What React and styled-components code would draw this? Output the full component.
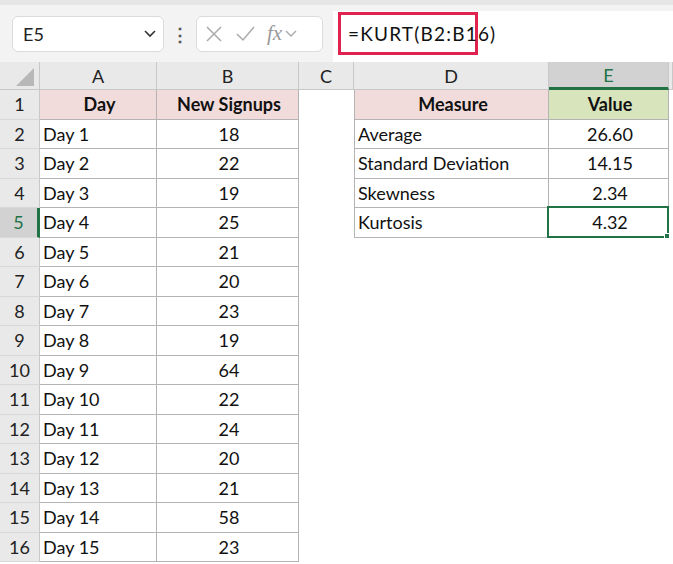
import React from "react";
import styled, { createGlobalStyle } from "styled-components";

const G = createGlobalStyle`
  body{margin:0;background:#fff;font-family:Lato,"Open Sans",sans-serif;}
`;
const Bar = styled.div`height:62px;background:#f3f3f3;border-top:5px solid #e6e6e6;box-sizing:border-box;display:flex;align-items:center;position:relative;`;
const NameBox = styled.div`margin-left:12px;width:152px;height:36px;box-sizing:border-box;background:#fff;border:1px solid #dcdcdc;border-radius:6px;display:flex;align-items:center;justify-content:space-between;padding:0 6px 0 10px;font-size:18px;color:#222;`;
const Dots = styled.div`width:32px;text-align:center;color:#555;font-size:18px;font-weight:bold;`;
const FxBox = styled.div`width:127px;height:36px;box-sizing:border-box;background:#fff;border:1px solid #dcdcdc;border-radius:6px;display:flex;align-items:center;gap:12px;padding:0 6px 0 8px;color:#aaa;`;
const Formula = styled.div`flex:1;align-self:stretch;margin:6px 0 0 10px;background:#fff;display:flex;align-items:center;`;
const Red = styled.div`margin-left:5px;margin-bottom:6px;height:43px;width:140px;box-sizing:border-box;border:3px solid #e0234e;display:flex;align-items:center;padding-left:7px;font-size:19px;font-family:Lato,sans-serif;letter-spacing:1.2px;color:#111;white-space:nowrap;`;
const Grid = styled.div`display:grid;grid-template-columns:40px 117px 142px 55px 195px 120px 4px;grid-template-rows:28px repeat(16,29.5px);font-size:18px;`;
const Hdr = styled.div`background:${p=>p.sel?"#d2d2d2":"#e9e9e9"};color:${p=>p.sel?"#217346":"#222"};border-right:1px solid #c8c8c8;border-bottom:${p=>p.sel?"3px solid #217346":"1px solid #c8c8c8"};display:flex;align-items:center;justify-content:center;box-sizing:border-box;`;
const RowH = styled(Hdr)`border-bottom:1px solid #d8d8d8;border-right:${p=>p.sel?"3px solid #217346":"1px solid #c8c8c8"};`;
const Cell = styled.div`box-sizing:border-box;display:flex;align-items:center;justify-content:${p=>p.c?"center":"flex-start"};padding-left:3px;background:${p=>p.bg||"#fff"};font-weight:${p=>p.b?700:400};color:#111;
  border-right:${p=>p.t?"1px solid #b4b4b4":"none"};border-bottom:${p=>p.t?"1px solid #b4b4b4":"none"};border-left:${p=>p.l?"1px solid #b4b4b4":"none"};position:relative;`;
const Sel = styled.div`position:absolute;inset:-2px -1px -1px -2px;border:2px solid #217346;`;
const Handle = styled.div`position:absolute;right:-4px;bottom:-4px;width:6px;height:6px;background:#217346;border:1px solid #fff;`;
const Corner = styled.div`background:#e9e9e9;border-right:1px solid #c8c8c8;border-bottom:1px solid #c8c8c8;position:relative;`;
const Fx = styled.span`font-family:"Liberation Serif",serif;font-style:italic;font-size:21px;color:#999;`;

const data=[18,22,19,25,21,20,23,19,64,22,24,20,21,58,23];
const stats=[["Average","26.60"],["Standard Deviation","14.15"],["Skewness","2.34"],["Kurtosis","4.32"]];

export default function App(){
  const rows=[];
  for(let r=1;r<=16;r++){
    rows.push(<RowH key={"h"+r} sel={r===5}>{r}</RowH>);
    if(r===1){
      rows.push(<Cell key="a" t b c bg="#f2dcdb">Day</Cell>,<Cell key="b" t b c bg="#f2dcdb">New Signups</Cell>,<Cell key="c"/>,<Cell key="d" t l b c bg="#f2dcdb">Measure</Cell>,<Cell key="e" t b c bg="#d8e4bc">Value</Cell>,<Cell key="f"/>);
    } else {
      rows.push(<Cell key={"a"+r} t>Day {r-1}</Cell>,<Cell key={"b"+r} t c>{data[r-2]}</Cell>,<Cell key={"c"+r}/>);
      const s=stats[r-2];
      if(s) rows.push(<Cell key={"d"+r} t l>{s[0]}</Cell>,<Cell key={"e"+r} t c>{s[1]}{r===5&&<><Sel/><Handle/></>}</Cell>);
      else rows.push(<Cell key={"d"+r}/>,<Cell key={"e"+r}/>);
      rows.push(<Cell key={"f"+r}/>);
    }
  }
  return <>
    <G/>
    <Bar>
      <NameBox>E5<svg width="14" height="10" viewBox="0 0 14 10"><path d="M2 2l5 5 5-5" stroke="#333" strokeWidth="1.6" fill="none"/></svg></NameBox>
      <Dots>⋮</Dots>
      <FxBox>
        <svg width="18" height="18" viewBox="0 0 18 18"><path d="M2 2l14 14M16 2L2 16" stroke="#aaa" strokeWidth="1.5"/></svg>
        <svg width="20" height="18" viewBox="0 0 20 18"><path d="M2 9l6 6L19 2" stroke="#aaa" strokeWidth="1.5" fill="none"/></svg>
        <span style={{display:"flex",alignItems:"center",gap:3}}>
          <Fx>fx</Fx>
          <svg width="12" height="8" viewBox="0 0 12 8"><path d="M1 1l5 5 5-5" stroke="#aaa" strokeWidth="1.4" fill="none"/></svg>
        </span>
      </FxBox>
      <Formula><Red>=KURT(B2:B16)</Red></Formula>
    </Bar>
    <Grid>
      <Corner><svg width="40" height="28" style={{position:"absolute",inset:0}}><path d="M34 6L34 24L16 24Z" fill="#b8b8b8"/></svg></Corner>
      {["A","B","C","D","E"].map(c=><Hdr key={c} sel={c==="E"}>{c}</Hdr>)}
      <Hdr/>
      {rows}
    </Grid>
  </>;
}
